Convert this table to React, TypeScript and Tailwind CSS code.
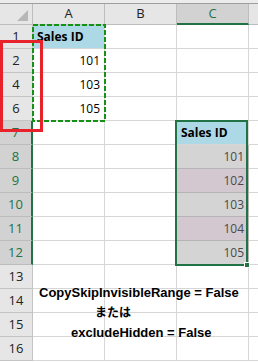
import React from 'react';

type Row = {
  label: string;
  selected: boolean;
  a?: string;
  aHead?: boolean;
  c?: string;
  cHead?: boolean;
  cBg?: string;
};

const rows: Row[] = [
  { label: '1', selected: false, a: 'Sales ID', aHead: true },
  { label: '2', selected: false, a: '101' },
  { label: '4', selected: false, a: '103' },
  { label: '6', selected: false, a: '105' },
  { label: '7', selected: true, c: 'Sales ID', cHead: true },
  { label: '8', selected: true, c: '101', cBg: 'bg-[#d4d4d4]' },
  { label: '9', selected: true, c: '102', cBg: 'bg-[#d3c8cf]' },
  { label: '10', selected: true, c: '103', cBg: 'bg-[#d4d4d4]' },
  { label: '11', selected: true, c: '104', cBg: 'bg-[#d3c8cf]' },
  { label: '12', selected: true, c: '105', cBg: 'bg-[#d4d4d4]' },
  { label: '13', selected: false },
  { label: '14', selected: false },
  { label: '15', selected: false },
  { label: '16', selected: false },
];

const Cell: React.FC<{ value?: string; head?: boolean; bg?: string; muted?: boolean }> = ({ value, head, bg, muted }) => {
  if (!value) return <div className="h-[24px] border-r border-b border-[#d6d6d6] bg-white" />;
  if (head) {
    return (
      <div className="h-[24px] border-r border-b border-[#d6d6d6] bg-[#add8e6] flex items-end pl-[4px] pb-[2px] text-[12px] font-bold text-black">
        Sales ID
      </div>
    );
  }
  return (
    <div
      className={`h-[24px] border-r border-b flex items-end justify-end pr-[4px] pb-[2px] text-[12px] ${
        bg ? `${bg} border-[#b4b4b4]` : 'bg-white border-[#d6d6d6]'
      } ${muted ? 'text-[#4a4a4a]' : 'text-black'}`}
    >
      {value}
    </div>
  );
};

export default function App() {
  return (
    <div className="relative w-[258px] h-[362px] overflow-hidden bg-white font-['Open_Sans',sans-serif]">
      <div className="h-[4px] bg-[#ececec] border-b border-[#9e9e9e]" />

      <div className="grid grid-cols-[33px_72px_72px_72px_9px]">
        {/* Column headers */}
        <div className="relative h-[21px] bg-[#e6e6e6] border-r border-b border-[#bdbdbd]">
          <svg className="absolute left-[17px] top-[6px]" width="11" height="11" viewBox="0 0 11 11">
            <polygon points="11,0 11,11 0,11" fill="#b7b7b7" />
          </svg>
        </div>
        <div className="h-[21px] bg-[#e6e6e6] border-r border-b border-[#bdbdbd] flex items-center justify-center text-[13px] text-[#222]">
          A
        </div>
        <div className="h-[21px] bg-[#e6e6e6] border-r border-b border-[#bdbdbd] flex items-center justify-center text-[13px] text-[#222]">
          B
        </div>
        <div className="h-[21px] bg-[#d2d2d2] border-r border-r-[#bdbdbd] border-b-2 border-b-[#217346] flex items-center justify-center text-[13px] text-[#217346]">
          C
        </div>
        <div className="h-[21px] bg-[#e6e6e6] border-b border-[#bdbdbd]" />

        {rows.map((r) => (
          <React.Fragment key={r.label}>
            <div
              className={`h-[24px] border-b flex items-center justify-center text-[13px] ${
                r.selected
                  ? 'bg-[#d2d2d2] border-b-[#bcbcbc] border-r-2 border-r-[#217346] text-[#217346]'
                  : 'bg-[#e6e6e6] border-b-[#c4c4c4] border-r border-r-[#c4c4c4] text-[#222]'
              }`}
            >
              {r.label}
            </div>
            <Cell value={r.a} head={r.aHead} />
            <Cell />
            <Cell value={r.c} head={r.cHead} bg={r.cBg} muted />
            <div className="h-[24px] border-b border-[#d6d6d6] bg-white" />
          </React.Fragment>
        ))}
      </div>

      {/* copy marquee around A1:A6 */}
      <svg className="absolute left-[32px] top-[24px]" width="74" height="98" viewBox="0 0 74 98">
        <rect x="1" y="1" width="72" height="96" fill="none" stroke="#149014" strokeWidth="2" strokeDasharray="5 2" />
      </svg>

      {/* red highlight over hidden rows */}
      <div className="absolute left-0 top-[40px] w-[43px] h-[92px] border-[3px] border-[#e8212b]" />

      {/* selection C7:C12 */}
      <div className="absolute left-[175px] top-[120px] w-[73px] h-[146px] border-2 border-[#217346]">
        <div className="absolute -right-[4px] -bottom-[4px] w-[6px] h-[6px] bg-[#217346] border border-white" />
      </div>

      {/* note */}
      <div className="absolute left-[39px] top-[283px] flex flex-col text-[13px] font-bold leading-[20px] text-black whitespace-nowrap font-['Liberation_Sans','Noto_Sans_CJK_JP',sans-serif]">
        <span>CopySkipInvisibleRange = False</span>
        <span className="ml-[56px] text-[12px]">または</span>
        <span className="ml-[32px]">excludeHidden = False</span>
      </div>
    </div>
  );
}
